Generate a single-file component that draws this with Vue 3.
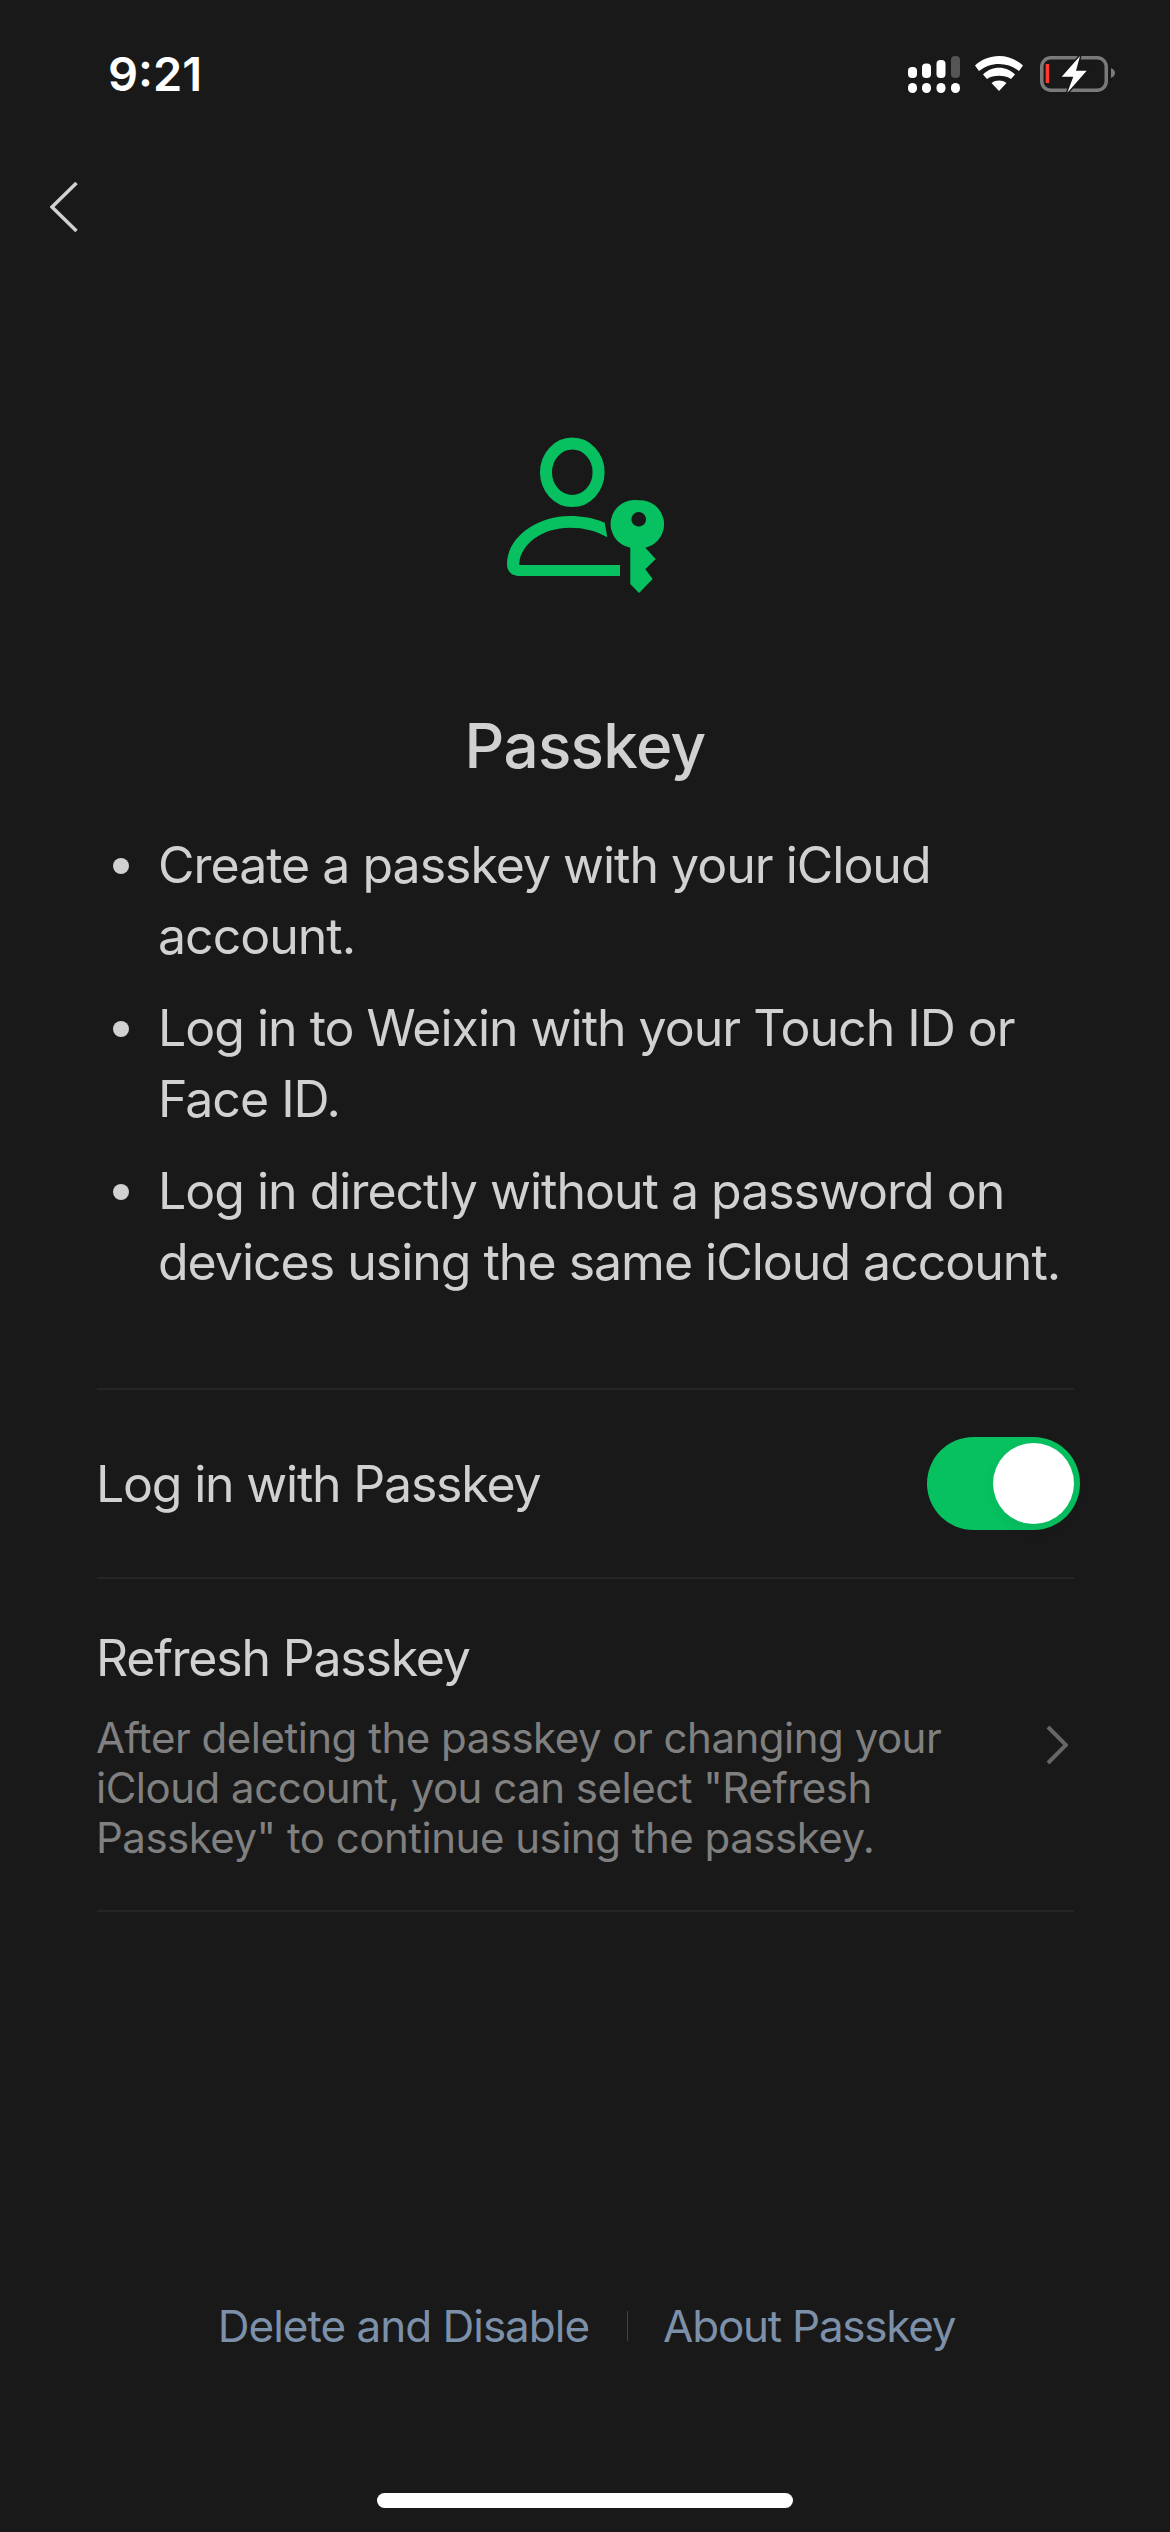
<script setup>
const bullets = [
  ['Create a passkey with your iCloud', 'account.'],
  ['Log in to Weixin with your Touch ID or', 'Face ID.'],
  ['Log in directly without a password on', 'devices using the same iCloud account.']
]
</script>

<template>
  <div class="page">
    <div class="status-bar">
      <span class="time">9:21</span>
      <div class="status-icons">
        <svg class="signal" width="52" height="37" viewBox="0 0 52 37">
          <rect x="0" y="11" width="9" height="11" rx="4" fill="#fff" />
          <rect x="14" y="7.500" width="9" height="14.500" rx="4" fill="#fff" />
          <rect x="28.500" y="4" width="9" height="18" rx="4" fill="#fff" />
          <rect x="43" y="0" width="9" height="22" rx="4" fill="#555" />
          <rect x="0" y="27" width="9" height="10" rx="4.500" fill="#fff" />
          <rect x="14" y="27" width="9" height="10" rx="4.500" fill="#fff" />
          <rect x="28.500" y="27" width="9" height="10" rx="4.500" fill="#fff" />
          <rect x="43" y="27" width="9" height="10" rx="4.500" fill="#fff" />
        </svg>
        <svg class="wifi" width="48" height="35" viewBox="0 0 48 35">
          <path d="M0 9.500C6.500 3.500 15 0 24 0s17.500 3.500 24 9.500l-4 5.500C38 10.500 31.500 8 24 8S10 10.500 4 15z" fill="#fff" />
          <path d="M8 18.500C12 14.300 18 11.800 24 11.800s12 2.500 16 6.700l-4 4.500C33 21 28.500 19.800 24 19.800S15 21 12 23z" fill="#fff" />
          <path d="M16.500 27c2-1.700 4.800-2.500 7.500-2.500s5.500.8 7.500 2.500L24 35z" fill="#fff" />
        </svg>
        <svg class="battery" width="75" height="38" viewBox="0 0 75 38">
          <rect x="1.750" y="1.750" width="64.500" height="32.500" rx="9" fill="none" stroke="#7a7a7a" stroke-width="3.500" />
          <path d="M71 12c2.500 1 4 2.800 4 5s-1.500 4-4 5z" fill="#7a7a7a" />
          <rect x="5.700" y="8" width="3.500" height="19" fill="#ff3b30" />
          <path d="M40 0L21.700 20.700H33.300L27.300 36.700L46.700 14.700H36z" fill="#fff" stroke="#191919" stroke-width="3" paint-order="stroke" />
        </svg>
      </div>
    </div>

    <div class="nav">
      <svg width="28" height="50" viewBox="0 0 28 50">
        <path d="M26.500 1L2 25l24.500 24" fill="none" stroke="#d1d1d1" stroke-width="3.500" />
      </svg>
    </div>

    <div class="hero">
      <svg width="210" height="200" viewBox="0 0 210 200">
        <ellipse cx="92.300" cy="62.300" rx="26.300" ry="28.800" fill="none" stroke="#07c160" stroke-width="12" />
        <path d="M124.700 112.700C114 108 102 106 90 106C56 106 27 128 27 154C27 162 32 166 40 166H140V155H40C39.300 155 39 154 39.300 153C41 134 62 117.700 90 117.700C104 117.700 117 121 127.300 127.300Z" fill="#07c160" />
        <path fill-rule="evenodd" d="M159 90.300a24 24 0 0 1 6.300 47.400L175.700 149 165.300 159.300 172.700 169 159 183 150.300 174V137.700A24 24 0 0 1 159 90.300ZM158.700 102a7.300 7.300 0 1 0 .01 0Z" fill="#07c160" />
      </svg>
    </div>

    <h1 class="title">Passkey</h1>

    <ul class="bullets">
      <li v-for="(lines, i) in bullets" :key="i" class="bullet">
        <span class="dot"></span>
        <span class="bullet-text">
          <span v-for="line in lines" :key="line" class="line">{{ line }}</span>
        </span>
      </li>
    </ul>

    <div class="settings">
      <div class="row toggle-row">
        <span class="row-label">Log in with Passkey</span>
        <div class="toggle"><span class="knob"></span></div>
      </div>
      <div class="row refresh-row">
        <div class="refresh-text">
          <div class="row-label">Refresh Passkey</div>
          <div class="desc">
            <div>After deleting the passkey or changing your</div>
            <div>iCloud account, you can select "Refresh</div>
            <div>Passkey" to continue using the passkey.</div>
          </div>
        </div>
        <svg class="chevron" width="22" height="40" viewBox="0 0 22 40">
          <path d="M2 2l18 18L2 38" fill="none" stroke="#666" stroke-width="4" />
        </svg>
      </div>
    </div>

    <div class="spacer"></div>

    <div class="footer">
      <span class="link">Delete and Disable</span>
      <span class="divider"></span>
      <span class="link about">About Passkey</span>
    </div>

    <div class="home-wrap"><div class="home-bar"></div></div>
  </div>
</template>

<style scoped>
.page {
  width: 1170px;
  height: 2532px;
  background: #191919;
  display: flex;
  flex-direction: column;
  font-family: Inter, "Liberation Sans", sans-serif;
  color: #d1d1d1;
  overflow: hidden;
}

.status-bar {
  display: flex;
  justify-content: space-between;
  align-items: flex-start;
  padding: 48px 55px 0 108px;
  height: 130px;
  box-sizing: border-box;
}

.time {
  font-size: 47px;
  line-height: 52px;
  font-weight: 600;
  color: #fff;
}

.status-icons {
  display: flex;
  align-items: flex-start;
  padding-top: 8px;
}

.wifi {
  margin-left: 15px;
}

.battery {
  margin-left: 17px;
}

.nav {
  padding: 52px 0 0 50px;
  height: 50px;
}

.hero {
  display: flex;
  justify-content: center;
  margin-top: 178px;
}

.title {
  margin: 94px 0 0;
  text-align: center;
  font-size: 62px;
  line-height: 84px;
  font-weight: 500;
  letter-spacing: -0.7px;
}

.bullets {
  list-style: none;
  margin: 42px 0 0;
  padding: 0 0 0 113px;
}

.bullet {
  display: flex;
  margin-bottom: 21px;
}

.dot {
  width: 16px;
  height: 16px;
  border-radius: 50%;
  background: #d1d1d1;
  margin-top: 28px;
  flex: none;
}

.bullet-text {
  margin-left: 29px;
  font-size: 50px;
  line-height: 71px;
  letter-spacing: -1px;
}

.line {
  display: block;
  white-space: nowrap;
}

.settings {
  margin: 69px 96px 0 97px;
  border-top: 2px solid #252525;
}

.row {
  display: flex;
  align-items: center;
  justify-content: space-between;
  border-bottom: 2px solid #252525;
}

.toggle-row {
  height: 187px;
}

.row-label {
  font-size: 50px;
  line-height: 64px;
  letter-spacing: -1.2px;
  margin-left: -1px;
}

.toggle {
  width: 153px;
  height: 93px;
  border-radius: 47px;
  background: #07c160;
  margin-right: -6px;
  position: relative;
}

.knob {
  position: absolute;
  right: 6px;
  top: 6px;
  width: 81px;
  height: 81px;
  border-radius: 50%;
  background: #fff;
  box-shadow: 0 4px 14px rgba(0, 0, 0, 0.06);
}

.refresh-row {
  height: 333px;
  box-sizing: border-box;
  padding: 0 6px 0 0;
}

.desc {
  margin: 23px 0 0 -1px;
  font-size: 42px;
  line-height: 50px;
  letter-spacing: -0.5px;
  color: #808080;
  white-space: nowrap;
}

.spacer {
  flex: 1;
}

.footer {
  display: flex;
  justify-content: center;
  align-items: center;
  height: 60px;
  padding-left: 3px;
}

.link {
  font-size: 44px;
  line-height: 60px;
  letter-spacing: -1px;
  color: #7d90a9;
}

.about {
  letter-spacing: -1.25px;
}

.divider {
  width: 1px;
  height: 30px;
  background: #444;
  margin: 0 35px 0 38px;
}

.home-wrap {
  display: flex;
  justify-content: center;
  padding: 137px 0 24px;
}

.home-bar {
  width: 416px;
  height: 15px;
  border-radius: 8px;
  background: #fff;
}
</style>

<style>
html, body {
  background: #191919;
}
</style>
